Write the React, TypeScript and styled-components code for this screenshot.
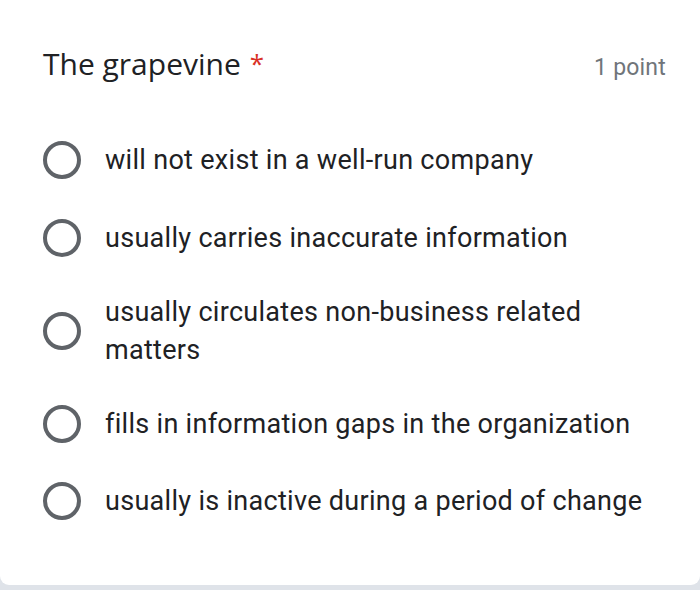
import React from "react";
import styled, { createGlobalStyle } from "styled-components";

const Global = createGlobalStyle`
  html, body { margin: 0; padding: 0; background: #dfe3e9; }
  body { width: 700px; height: 590px; overflow: hidden; }
`;

const Card = styled.div`
  box-sizing: border-box;
  width: 700px;
  height: 585px;
  background: #ffffff;
  border-radius: 0 0 9px 9px;
  padding: 43px 34px 0 43px;
  font-family: Roboto, "Liberation Sans", sans-serif;
`;

const Header = styled.div`
  display: flex;
  justify-content: space-between;
  align-items: baseline;
`;

const Title = styled.div`
  font-family: "Open Sans", Roboto, sans-serif;
  font-size: 30px;
  line-height: 40px;
  color: #202124;
`;

const Star = styled.span`
  color: #d93025;
  margin-left: 9px;
  font-size: 26px;
  vertical-align: 2px;
`;

const Points = styled.div`
  font-size: 23px;
  color: #70757a;
  letter-spacing: 0.2px;
`;

const List = styled.div`
  display: flex;
  flex-direction: column;
  gap: 39.5px;
  margin-top: 57px;
`;

const Option = styled.div`
  display: flex;
  align-items: center;
  gap: 24px;
`;

const Radio = styled.div`
  flex: none;
  box-sizing: border-box;
  width: 38px;
  height: 38px;
  border-radius: 50%;
  border: 4px solid #5f6368;
`;

const Label = styled.div`
  flex: 1;
  margin: -3.5px 0;
  font-size: 27px;
  line-height: 38px;
  letter-spacing: 0.3px;
  color: #202124;
`;

const options = [
  "will not exist in a well-run company",
  "usually carries inaccurate information",
  "usually circulates non-business related matters",
  "fills in information gaps in the organization",
  "usually is inactive during a period of change",
];

export default function App() {
  return (
    <>
      <Global />
      <Card>
        <Header>
          <Title>
            The grapevine<Star>*</Star>
          </Title>
          <Points>1 point</Points>
        </Header>
        <List>
          {options.map((o) => (
            <Option key={o}>
              <Radio />
              <Label>{o}</Label>
            </Option>
          ))}
        </List>
      </Card>
    </>
  );
}
